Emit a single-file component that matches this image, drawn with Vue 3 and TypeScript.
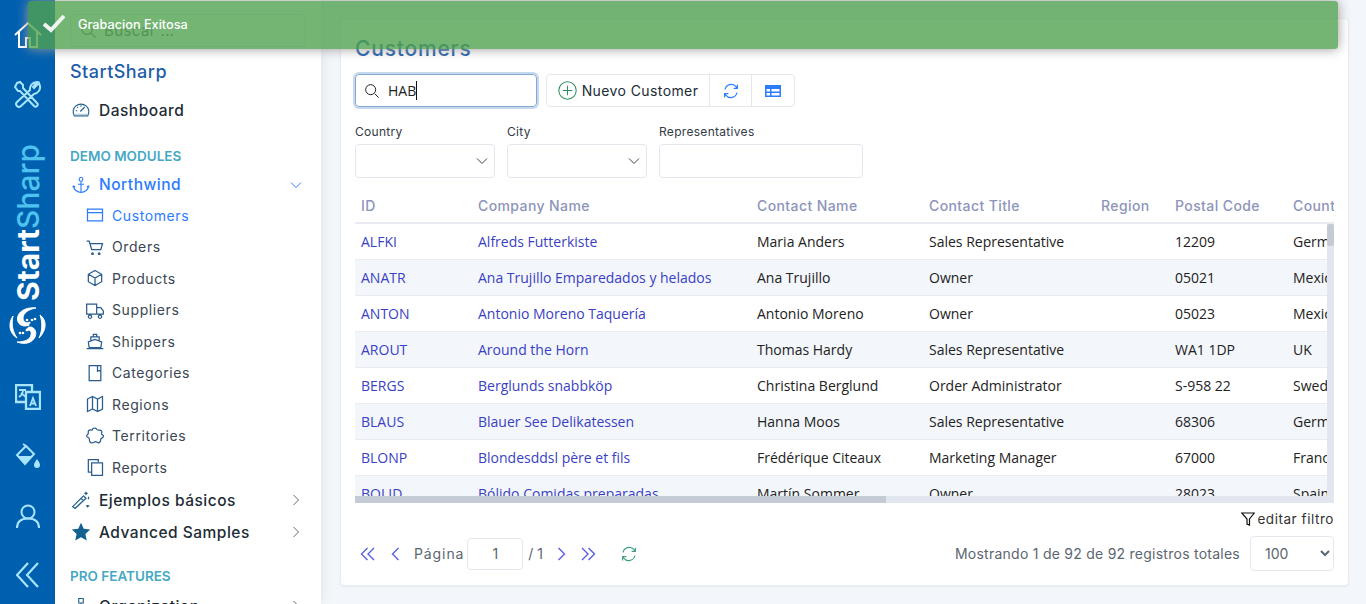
<script setup lang="ts">
const stroke = {
  customers: 'M3 5h18v14H3zM3 9h18',
  orders: 'M2 5h3l3 10h11l2-7H6M9 19a1 1 0 1 0 .01 0M17 19a1 1 0 1 0 .01 0',
  products: 'M12 3l8 4.5v9L12 21l-8-4.500v-9zM4 7.500l8 4.500 8-4.500M12 12v9',
  suppliers: 'M2 5h12v12H2zM14 9h5l3 4v4h-8M6 18a2 2 0 1 0 .01 0M18 18a2 2 0 1 0 .01 0',
  shippers: 'M4 13l8-3 8 3-1 7H5zM7 11V7h10v4M10 7V4h4v3M2 21h20M9 15h.01M12 15h.01M15 15h.01',
  categories: 'M5 3h14v18H5zM15 3v7l2-1 2 1',
  regions: 'M3 6l6-3 6 3 6-3v15l-6 3-6-3-6 3zM9 3v15M15 6v15',
  territories: 'M9 4c0-2 5-2 5 0 0 2 5 0 6 2 1 2-1 3 0 4s3 1 2 3-3 1-3 3 0 3-2 4-3-2-5-1-3 2-5 1-2-3-2-5-3-1-3-3 2-2 2-3-1-3 1-4 4 1 4-1z',
  reports: 'M16 6V3H4v15h4M8 7h13v15H8z'
}
const subItems = [
  ['Customers', stroke.customers],
  ['Orders', stroke.orders],
  ['Products', stroke.products],
  ['Suppliers', stroke.suppliers],
  ['Shippers', stroke.shippers],
  ['Categories', stroke.categories],
  ['Regions', stroke.regions],
  ['Territories', stroke.territories],
  ['Reports', stroke.reports]
]
const columns = ['ID', 'Company Name', 'Contact Name', 'Contact Title', 'Region', 'Postal Code', 'Country']
const rows = [
  ['ALFKI', 'Alfreds Futterkiste', 'Maria Anders', 'Sales Representative', '', '12209', 'Germany'],
  ['ANATR', 'Ana Trujillo Emparedados y helados', 'Ana Trujillo', 'Owner', '', '05021', 'Mexico'],
  ['ANTON', 'Antonio Moreno Taquería', 'Antonio Moreno', 'Owner', '', '05023', 'Mexico'],
  ['AROUT', 'Around the Horn', 'Thomas Hardy', 'Sales Representative', '', 'WA1 1DP', 'UK'],
  ['BERGS', 'Berglunds snabbköp', 'Christina Berglund', 'Order Administrator', '', 'S-958 22', 'Sweden'],
  ['BLAUS', 'Blauer See Delikatessen', 'Hanna Moos', 'Sales Representative', '', '68306', 'Germany'],
  ['BLONP', 'Blondesddsl père et fils', 'Frédérique Citeaux', 'Marketing Manager', '', '67000', 'France'],
  ['BOLID', 'Bólido Comidas preparadas', 'Martín Sommer', 'Owner', '', '28023', 'Spain']
]
const refreshPath = 'M4 10a8.500 8.500 0 0 1 15-3.500l1.500 2M20.500 3.500v5h-5M20 14a8.500 8.500 0 0 1-15 3.500l-1.500-2M3.500 20.500v-5h5'
const logoDots = [[27, 320], [32, 320], [35, 319], [28, 325], [27, 330], [23, 333], [20, 333]]
</script>

<template>
  <div class="page">
    <aside class="rail">
      <svg class="rail-home" viewBox="0 0 28 28" width="28" height="28"><path d="M1 14 14 2l13 12M5 11v15h7v-9h4v9h7V11" /></svg>
      <svg class="rail-tools" viewBox="0 0 28 28" width="28" height="28"><path d="M3 3l3-1 3 3v3l14 15a2 2 0 0 1-3 3L6 11H4L1 7zM25 3l-5 5-1-1 4-5a7 7 0 0 0-7 8L3 22a2.500 2.500 0 0 0 4 4l13-12a7 7 0 0 0 6-8l-1-3z" /></svg>
      <div class="brand">Start<span>Sharp</span></div>
      <svg class="rail-logo" viewBox="8 305 40 42" width="40" height="42">
        <path class="solid" d="M36 308C28 307 20 310 18 316C16 322 20 326 25 326C28 326 30 324 30 322C27 324 23 322 23 318C23 313 29 309 36 308Z" />
        <path class="solid" d="M17 342C25 345 32 343 35 337C37 332 35 328 31 327C28 327 26 329 26 331C29 329 32 331 31 335C30 340 24 342 17 342Z" />
        <path class="solid" d="M13 316C8 323 9 333 17 338C13 332 11 325 13 316Z" />
        <path class="solid" d="M40 315C47 320 47 330 39 338C42 332 43 323 40 315Z" />
        <circle v-for="d in logoDots" :key="d[0] * 100 + d[1]" class="dot" :cx="d[0]" :cy="d[1]" r="1.300" />
      </svg>
      <svg class="rail-lang" viewBox="0 0 26 26" width="26" height="26"><path d="M1 1h16v17H1z" /><path class="rail-bg" d="M11 8h14v17H11z" /><path class="thin" d="M4 6h7M8 6c0 3-1 5-4 7M6 9l5 4M15 22l3-8 3 8M16 19.500h4" /></svg>
      <svg class="rail-bucket" viewBox="0 0 26 26" width="26" height="26"><path class="fill-light" d="M3 13h15l-8 8zM22 16c2 3 3 4 3 6a3 3 0 0 1-6 0c0-2 1-3 3-6z" /><path d="M11 3 2 12l8 9 9-10zM8 1l3 2" /></svg>
      <svg class="rail-user" viewBox="0 0 26 26" width="26" height="26"><circle cx="13" cy="8" r="6.500" /><path d="M2 24c0-6 4-9.500 11-9.500S24 18 24 24" /></svg>
      <svg class="rail-back" viewBox="0 0 24 26" width="24" height="26"><path d="M12 1 1 13l11 12M22 1 11 13l11 12" /></svg>
    </aside>

    <nav class="side">
      <div class="side-search">
        <svg viewBox="0 0 24 24" width="17" height="17"><circle cx="10" cy="10" r="7.500" /><path d="M16 16l6 6" /></svg>
        <span>Buscar ...</span>
      </div>
      <div class="side-title">StartSharp</div>
      <div class="nav-top dash">
        <svg viewBox="0 0 24 24" width="18" height="18"><path d="M3 20a10.500 10.500 0 1 1 18 0zM11 14l6-6M5 13h2M7 8l1 1M12 5.500v2" /><path class="fill-soft" d="M3 17h18l-1 3H4z" /></svg>
        Dashboard
      </div>
      <div class="section">DEMO MODULES</div>
      <div class="nav-top active">
        <svg viewBox="0 0 24 24" width="18" height="18"><circle cx="12" cy="4.500" r="2.500" /><path d="M12 7v15M8 11h8M2 13c0 5 5 9 10 9s10-4 10-9M2 13l-1 2M2 13l2 2M22 13l-2 2M22 13l1 2" /></svg>
        Northwind
        <svg class="chev" viewBox="0 0 12 12" width="12" height="12"><path d="M1 3.500l5 5 5-5" /></svg>
      </div>
      <div class="sub-list">
        <div v-for="(item, i) in subItems" :key="item[0]" class="nav-sub" :class="{ current: i === 0 }">
          <svg viewBox="0 0 24 24" width="20" height="20"><path :d="item[1]" /></svg>
          {{ item[0] }}
        </div>
      </div>
      <div class="nav-top compact">
        <svg viewBox="0 0 24 24" width="20" height="20"><path d="M2 20l13-13 3 3L5 22zM12 10l3 3M18 2v4M16 4h4M21 8v3M20 18v3M18 19h4" /></svg>
        Ejemplos básicos
        <svg class="chev side-chev" viewBox="0 0 12 12" width="12" height="12"><path d="M3.500 1l5 5-5 5" /></svg>
      </div>
      <div class="nav-top compact">
        <svg viewBox="0 0 24 24" width="20" height="20"><path class="solid-star" d="M12 1l3.300 7.200 7.700.900-5.700 5.300 1.600 7.800L12 18.300l-6.900 3.900 1.600-7.800L1 9.100l7.700-.900z" /></svg>
        Advanced Samples
        <svg class="chev side-chev" viewBox="0 0 12 12" width="12" height="12"><path d="M3.500 1l5 5-5 5" /></svg>
      </div>
      <div class="section pro">PRO FEATURES</div>
      <div class="nav-top org">
        <svg viewBox="0 0 24 24" width="18" height="18"><path d="M9 2h6v6H9zM12 8v6M3 14h6v6H3zM15 14h6v6h-6z" /></svg>
        Organization
        <svg class="chev side-chev" viewBox="0 0 12 12" width="12" height="12"><path d="M3.500 1l5 5-5 5" /></svg>
      </div>
    </nav>

    <main class="main">
      <section class="card">
        <h1>Customers</h1>
        <div class="toolbar">
          <div class="quick">
            <svg viewBox="0 0 24 24" width="16" height="16"><circle cx="10" cy="10" r="7.500" /><path d="M16 16l6 6" /></svg>
            <span class="quick-text">HAB</span><i class="caret"></i>
          </div>
          <div class="btn-group">
            <button class="add">
              <svg viewBox="0 0 24 24" width="19" height="19"><circle cx="12" cy="12" r="11" /><path d="M12 6v12M6 12h12" /></svg>
              Nuevo Customer
            </button>
            <button class="icon-btn blue">
              <svg viewBox="0 0 24 24" width="18" height="18"><path :d="refreshPath" /></svg>
            </button>
            <button class="icon-btn tbl">
              <svg viewBox="0 0 16 14" width="16" height="14"><path class="tbl-fill" d="M0 1h16v12H0zM1.500 5v2.500h3.500V5zm5 0v2.500h8V5zm-5 4v2.500h3.500V9zm5 0v2.500h8V9z" /></svg>
            </button>
          </div>
        </div>
        <div class="filters">
          <label class="filter narrow">Country<span class="field"><svg viewBox="0 0 12 12" width="12" height="12"><path d="M1 3.500l5 5 5-5" /></svg></span></label>
          <label class="filter narrow">City<span class="field"><svg viewBox="0 0 12 12" width="12" height="12"><path d="M1 3.500l5 5 5-5" /></svg></span></label>
          <label class="filter wide">Representatives<span class="field"></span></label>
        </div>

        <div class="grid">
          <div class="grid-row head">
            <div v-for="c in columns" :key="c" class="cell">{{ c }}</div>
          </div>
          <div v-for="(r, i) in rows" :key="r[0]" class="grid-row body" :class="{ odd: i % 2 === 1 }">
            <div v-for="(v, j) in r" :key="j" class="cell" :class="{ link: j < 2 }">{{ v }}</div>
          </div>
          <div class="scroll-h"><div class="thumb-h"></div></div>
          <div class="scroll-v"><div class="thumb-v"></div></div>
        </div>

        <div class="edit-filter">
          <svg viewBox="0 0 14 14" width="14" height="14"><path d="M.700 1h12.600L8.500 7v6l-2.500-1V7z" /></svg>
          editar filtro
        </div>
        <div class="pager">
          <div class="pager-left">
            <svg class="pg first" viewBox="0 0 16 14" width="16" height="14"><path d="M7.500 1l-6 6 6 6M14 1 8 7l6 6" /></svg>
            <svg class="pg prev" viewBox="0 0 10 14" width="10" height="14"><path d="M8.500 1l-6 6 6 6" /></svg>
            <span class="pg-label">Página</span>
            <span class="pg-input">1</span>
            <span class="pg-total">/ 1</span>
            <svg class="pg next" viewBox="0 0 10 14" width="10" height="14"><path d="M1.500 1l6 6-6 6" /></svg>
            <svg class="pg last" viewBox="0 0 16 14" width="16" height="14"><path d="M2 1l6 6-6 6M8.500 1l6 6-6 6" /></svg>
            <svg class="pg-refresh" viewBox="0 0 24 24" width="18" height="18"><path :d="refreshPath" /></svg>
          </div>
          <div class="pager-right">
            <span>Mostrando 1 de 92 de 92 registros totales</span>
            <select class="size"><option>100</option></select>
          </div>
        </div>
      </section>
    </main>

    <div class="toast">
      <svg viewBox="0 0 24 20" width="24" height="20"><path d="M2 11l7 6L22 3" /></svg>
      <span>Grabacion Exitosa</span>
    </div>
  </div>
</template>

<style>
html, body { margin: 0; padding: 0; overflow: hidden; }
</style>

<style scoped>
.page {
  position: relative;
  display: flex;
  height: 604px;
  overflow: hidden;
  background: #f3f6fa;
  font-family: Inter, "Liberation Sans", sans-serif;
  color: #212b36;
}
svg { flex: none; fill: none; stroke: currentColor; stroke-width: 1.5; }

.rail {
  width: 55px;
  flex: none;
  background: #0060b0;
  color: #fff;
  display: flex;
  flex-direction: column;
  align-items: center;
}
.rail svg { color: #a8e4fb; }
.rail-home { margin-top: 21px; color: #fff !important; stroke-width: 2; }
.rail-tools { margin-top: 31px; stroke-width: 2; }
.brand {
  margin-top: 37px;
  height: 156px;
  writing-mode: vertical-rl;
  transform: rotate(180deg);
  font-size: 30px;
  font-weight: 700;
  line-height: 36px;
  color: #fff;
  white-space: nowrap;
}
.brand span { color: #4fc3ef; font-weight: 500; }
.rail-logo { margin-top: 4px; }
.rail-logo .solid { fill: #fff; stroke: #fff; stroke-width: 1; stroke-linejoin: round; }
.rail-logo .dot { fill: #fff; stroke: none; }
.rail-lang { margin-top: 37px; stroke-width: 2.300; }
.rail-lang .thin { stroke-width: 1.800; }
.rail-bg { fill: #0060b0; }
.rail-bucket { margin-top: 33px; stroke-width: 2; }
.rail-user { margin-top: 35px; stroke-width: 2; }
.rail-back { margin-top: 32px; stroke-width: 2.2; }
.fill-light { fill: #a8e4fb; stroke: none; }

.side {
  width: 266px;
  flex: none;
  background: #fff;
  box-shadow: 2px 0 10px rgba(40, 60, 90, .08);
  padding: 14px 15px 0;
  box-sizing: border-box;
  overflow: hidden;
  position: relative;
}
.side-search {
  height: 33px;
  box-sizing: border-box;
  border: 1px solid #e3e7ee;
  border-radius: 4px;
  display: flex;
  align-items: center;
  gap: 7px;
  padding-left: 9px;
  font-size: 15px;
  letter-spacing: .4px;
  color: #555;
  width: 236px;
}
.side-title {
  margin-top: 14px;
  font-size: 18px;
  line-height: 22px;
  letter-spacing: .45px;
  font-weight: 500;
  color: #1e5ea8;
}
.nav-top {
  display: flex;
  align-items: center;
  height: 32px;
  font-size: 15.500px;
  letter-spacing: .5px;
  font-weight: 450;
  color: #212b36;
}
.nav-top > svg:first-child { margin-right: 9px; margin-left: 2px; color: #20618f; }
.dash { margin-top: 11px; }
.fill-soft { fill: #20618f; stroke: none; opacity: .3; }
.nav-top.compact > svg:first-child { margin-left: 1px; margin-right: 8px; }
.nav-top.active { color: #2b7cff; margin-top: 3.500px; height: 30px; }
.nav-top.active > svg:first-child { color: #2b7cff; }
.nav-top .chev { margin-left: auto; margin-right: 4px; color: #2b7cff; stroke-width: 1; }
.nav-top .side-chev { color: #667; }
.section {
  margin-top: 20px;
  font-size: 13.500px;
  line-height: 20px;
  font-weight: 600;
  color: #46a8c4;
}
.section.pro { margin-top: 18px; }
.org { margin-top: 4px; }
.sub-list { margin-bottom: 1px; }
.nav-sub {
  display: flex;
  align-items: center;
  height: 31.500px;
  padding-left: 15px;
  gap: 7px;
  font-size: 14px;
  letter-spacing: .6px;
  color: #3a4654;
}
.nav-sub svg { color: #2a5d8e; stroke-width: 1.500; }
.nav-sub.current { color: #2b7cff; }
.nav-sub.current svg { color: #2b7cff; }
.solid-star { fill: #13618f; stroke: none; }

.main { flex: 1; padding: 18px 17px 18px 19px; min-width: 0; }
.card {
  height: 568px;
  box-sizing: border-box;
  background: #fff;
  border: 1px solid #e8ecf2;
  border-radius: 4px;
  padding: 16px 14px 0;
  box-shadow: 0 1px 2px rgba(40, 60, 90, .05);
}
h1 {
  margin: 0;
  font-size: 21px;
  line-height: 28px;
  font-weight: 500;
  letter-spacing: .8px;
  color: #1e5ea8;
}
.toolbar { display: flex; gap: 9px; margin-top: 11px; }
.quick {
  width: 182px;
  height: 33px;
  box-sizing: border-box;
  border: 1px solid #86a8d0;
  border-radius: 4px;
  box-shadow: 0 0 0 2px #c5d9ef;
  display: flex;
  align-items: center;
  padding-left: 8px;
  font: 14px "Open Sans", sans-serif;
  color: #222;
}
.quick-text { margin-left: 8px; }
.caret { width: 1px; height: 19px; background: #111; }
.btn-group {
  display: flex;
  height: 33px;
  border: 1px solid #e3e7ee;
  border-radius: 4px;
  box-sizing: border-box;
}
button {
  border: 0;
  border-left: 1px solid #e3e7ee;
  background: none;
  padding: 0;
  display: flex;
  align-items: center;
  justify-content: center;
  font: inherit;
  color: inherit;
}
.add {
  width: 162px;
  border-left: 0;
  gap: 5px;
  padding-bottom: 1px;
  font-size: 14px;
  letter-spacing: .4px;
  color: #212b36;
}
.add svg { color: #2f8b62; stroke-width: 1.300; }
.icon-btn { width: 42px; }
.icon-btn.tbl { width: 43px; }
.blue svg { color: #2b7cff; stroke-width: 1.600; }
.tbl-fill { fill: #2b7cff; stroke: none; fill-rule: evenodd; }

.filters { display: flex; gap: 12px; margin-top: 17px; }
.filter {
  display: flex;
  flex-direction: column;
  font-size: 12px;
  line-height: 16px;
  letter-spacing: .3px;
  color: #333a45;
  gap: 4px;
}
.narrow { width: 140px; }
.wide { width: 204px; }
.field {
  height: 34px;
  box-sizing: border-box;
  border: 1px solid #e3e7ee;
  border-radius: 4px;
  display: flex;
  align-items: center;
  justify-content: flex-end;
  padding-right: 6px;
  color: #444;
}
.field svg { stroke-width: 1; }

.grid {
  position: relative;
  margin-top: 10px;
  height: 315px;
  overflow: hidden;
  font: 14px "Open Sans", sans-serif;
  color: #222;
}
.grid-row {
  display: grid;
  grid-template-columns: 117px 279px 172px 172px 74px 118px 47px;
  width: 979px;
  overflow: hidden;
}
.cell { padding-left: 6px; white-space: nowrap; overflow: hidden; }
.head {
  height: 36px;
  box-sizing: border-box;
  border-bottom: 2px solid #e8ecf2;
  align-items: center;
  font-family: Inter, sans-serif;
  font-size: 14px;
  letter-spacing: .4px;
  font-weight: 500;
  color: #8d94bb;
}
.body {
  height: 36px;
  box-sizing: border-box;
  border-bottom: 1px solid #e8ecf2;
  align-items: center;
}
.odd { background: #f3f6fa; }
.link { color: #3a3fc4; }
.scroll-h {
  position: absolute;
  left: 0;
  bottom: 0;
  width: 979px;
  height: 7px;
  background: #e2e6ee;
}
.thumb-h { width: 531px; height: 7px; background: #c5cbd5; }
.scroll-v {
  position: absolute;
  right: 0;
  top: 36px;
  bottom: 7px;
  width: 7px;
  background: #e2e6ee;
}
.thumb-v { width: 7px; height: 22px; background: #c5cbd5; border-radius: 2px; }

.edit-filter {
  margin-top: 7px;
  height: 18px;
  display: flex;
  align-items: center;
  justify-content: flex-end;
  gap: 2px;
  font-size: 13.500px;
  letter-spacing: .55px;
  color: #333;
}
.edit-filter svg { color: #111; stroke-width: 1.200; }
.pager {
  margin-top: 8px;
  display: flex;
  align-items: center;
  justify-content: space-between;
  height: 35px;
}
.pager-left { display: flex; align-items: center; color: #5a5fe0; }
.pg { stroke-width: 1.400; }
.first { margin-left: 5px; }
.prev { margin-left: 14px; }
.pg-label { margin-left: 14px; font-size: 14px; letter-spacing: .9px; color: #5c6670; }
.pg-input {
  margin-left: 3px;
  width: 56px;
  height: 32px;
  box-sizing: border-box;
  border: 1px solid #e3e7ee;
  border-radius: 4px;
  display: flex;
  align-items: center;
  justify-content: center;
  font-size: 14px;
  color: #5c6670;
}
.pg-total { margin-left: 5px; font-size: 14px; color: #5c6670; }
.next { margin-left: 14px; }
.last { margin-left: 13px; }
.pg-refresh { margin-left: 24px; color: #3f9f86; }
.pager-right {
  display: flex;
  align-items: center;
  gap: 10px;
  font-size: 14px;
  letter-spacing: .25px;
  color: #5c6670;
}
.size {
  width: 84px;
  height: 35px;
  box-sizing: border-box;
  border: 1px solid #e3e7ee;
  border-radius: 4px;
  background: #fff;
  font: inherit;
  color: #5c6670;
  padding-left: 10px;
}

.toast {
  position: absolute;
  left: 28px;
  top: 1px;
  width: 1310px;
  height: 48px;
  background: rgba(81, 163, 81, .8);
  border-radius: 3px;
  box-shadow: 0 0 12px #999;
  display: flex;
  align-items: center;
  padding-left: 14px;
  padding-bottom: 2px;
  box-sizing: border-box;
  color: #fff;
  font-size: 12.700px;
  font-weight: 500;
  gap: 12px;
}
.toast svg { stroke-width: 4; color: #f0f5f0; margin-top: -2px; }
</style>
